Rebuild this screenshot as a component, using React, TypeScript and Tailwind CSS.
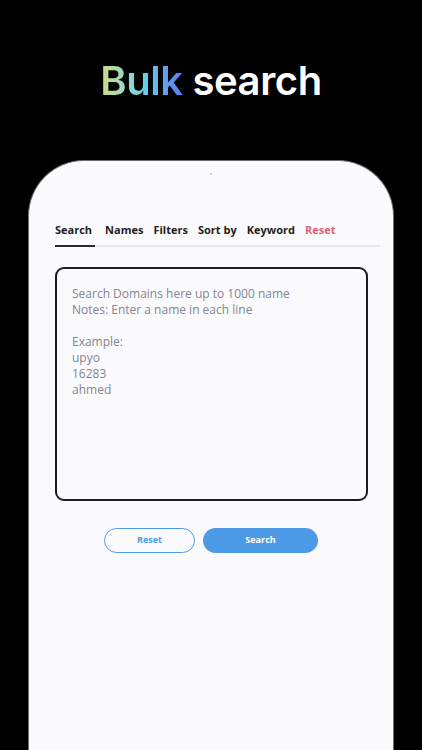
const tabs = ["Search", "Names", "Filters", "Sort by", "Keyword"];

const hint = [
  "Search Domains here up to 1000 name",
  "Notes: Enter a name in each line",
  "",
  "Example:",
  "upyo",
  "16283",
  "ahmed",
];

export default function App() {
  return (
    <div className="flex h-[750px] w-[422px] flex-col items-center overflow-hidden bg-black font-['Inter',sans-serif]">
      <h1 className="mt-[57px] text-[40px] font-semibold leading-[48px] tracking-[-0.01em] text-white">
        <span className="bg-gradient-to-r from-[#d2db7c] via-[#6fd3e8] to-[#5b78f2] bg-clip-text text-transparent">
          Bulk
        </span>{" "}
        search
      </h1>

      <div className="mt-[55px] flex w-[366px] flex-1 flex-col rounded-t-[56px] border-x border-t border-[#6b6b70] bg-[#fbfbfd] px-[26px]">
        <div className="mx-auto mt-[12px] h-[2px] w-[2px] rounded-full bg-[#c8c8cc]" />

        <div className="-mr-[13px] mt-[47px] flex items-end gap-[10px] border-b-2 border-[#e8e8ec] font-['Open_Sans',sans-serif] text-[11px] font-bold text-[#1e1e22]">
          {tabs.map((t, i) => (
            <div
              key={t}
              className={
                i === 0
                  ? "-mb-[2px] border-b-2 border-[#2a2a2e] pb-[6px] pr-[3px]"
                  : "pb-[6px]"
              }
            >
              {t}
            </div>
          ))}
          <div className="pb-[6px] text-[#e0607a]">Reset</div>
        </div>

        <div className="mt-[20px] h-[234px] w-[313px] rounded-[9px] border-2 border-[#1c1c1f] px-[15px] pt-[17px] font-['Open_Sans',sans-serif] text-[12px] leading-[16px] text-[#85858f]">
          {hint.map((l, i) => (
            <div key={i} className="h-[16px]">
              {l}
            </div>
          ))}
        </div>

        <div className="mt-[27px] flex justify-center gap-[8px] font-['Open_Sans',sans-serif] text-[9px] font-bold">
          <button className="h-[25px] w-[91px] rounded-full border border-[#4d9be6] text-[#4d9be6]">
            Reset
          </button>
          <button className="h-[25px] w-[115px] rounded-full bg-[#4d9be6] text-white">
            Search
          </button>
        </div>
      </div>
    </div>
  );
}
